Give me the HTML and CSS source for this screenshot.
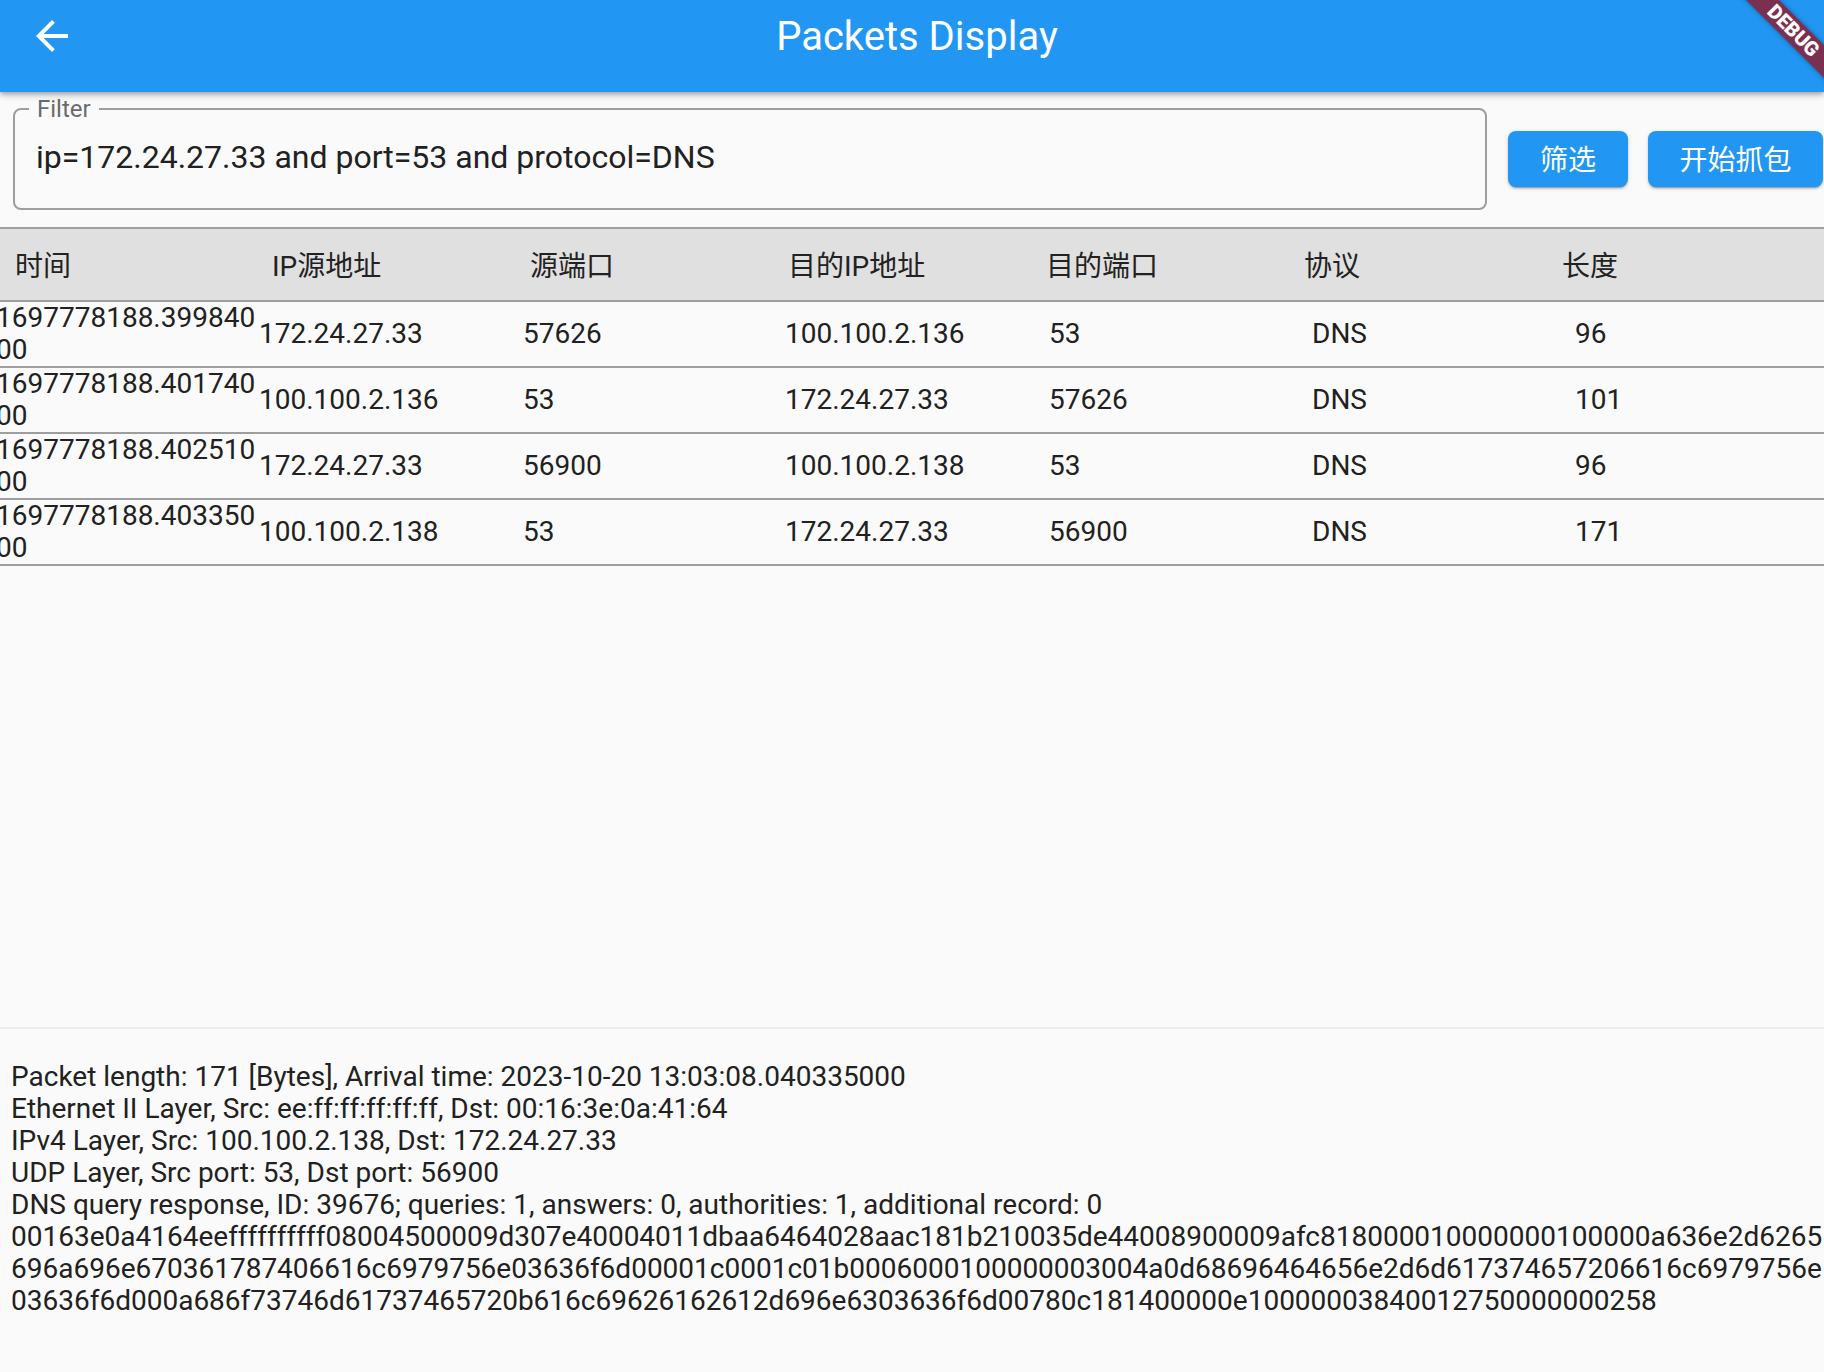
FILE: index.html
```html
<!DOCTYPE html>
<html lang="zh-CN">
<head>
<meta charset="utf-8">
<title>Packets Display</title>
<link rel="stylesheet" href="styles.css">
</head>
<body>
<div class="app">
  <header class="appbar">
    <div class="appbar-row">
      <button class="back" aria-label="Back">
        <svg viewBox="0 0 24 24" width="48" height="48"><path fill="#fff" d="M20 11H7.83l5.59-5.59L12 4l-8 8 8 8 1.41-1.41L7.83 13H20v-2z"/></svg>
      </button>
      <h1 class="title">Packets Display</h1>
    </div>
  </header>

  <main class="body">
    <div class="filter-row">
      <div class="field">
        <span class="field-label">Filter</span>
        <div class="field-input">ip=172.24.27.33 and port=53 and protocol=DNS</div>
      </div>
      <button class="btn btn-filter">筛选</button>
      <button class="btn btn-start">开始抓包</button>
    </div>

    <section class="table">
      <div class="thead">
        <div class="th">时间</div>
        <div class="th">IP源地址</div>
        <div class="th">源端口</div>
        <div class="th">目的IP地址</div>
        <div class="th">目的端口</div>
        <div class="th">协议</div>
        <div class="th">长度</div>
      </div>
      <div class="tr">
        <div class="td td-time">1697778188.39984000</div>
        <div class="td">172.24.27.33</div>
        <div class="td">57626</div>
        <div class="td">100.100.2.136</div>
        <div class="td">53</div>
        <div class="td">DNS</div>
        <div class="td">96</div>
      </div>
      <div class="tr">
        <div class="td td-time">1697778188.40174000</div>
        <div class="td">100.100.2.136</div>
        <div class="td">53</div>
        <div class="td">172.24.27.33</div>
        <div class="td">57626</div>
        <div class="td">DNS</div>
        <div class="td">101</div>
      </div>
      <div class="tr">
        <div class="td td-time">1697778188.40251000</div>
        <div class="td">172.24.27.33</div>
        <div class="td">56900</div>
        <div class="td">100.100.2.138</div>
        <div class="td">53</div>
        <div class="td">DNS</div>
        <div class="td">96</div>
      </div>
      <div class="tr">
        <div class="td td-time">1697778188.40335000</div>
        <div class="td">100.100.2.138</div>
        <div class="td">53</div>
        <div class="td">172.24.27.33</div>
        <div class="td">56900</div>
        <div class="td">DNS</div>
        <div class="td">171</div>
      </div>
    </section>

    <section class="details">
      <div class="line">Packet length: 171 [Bytes], Arrival time: 2023-10-20 13:03:08.040335000</div>
      <div class="line">Ethernet II Layer, Src: ee:ff:ff:ff:ff:ff, Dst: 00:16:3e:0a:41:64</div>
      <div class="line">IPv4 Layer, Src: 100.100.2.138, Dst: 172.24.27.33</div>
      <div class="line">UDP Layer, Src port: 53, Dst port: 56900</div>
      <div class="line">DNS query response, ID: 39676; queries: 1, answers: 0, authorities: 1, additional record: 0</div>
      <div class="line">00163e0a4164eeffffffffff08004500009d307e40004011dbaa6464028aac181b210035de44008900009afc818000010000000100000a636e2d6265</div>
      <div class="line">696a696e670361787406616c6979756e03636f6d00001c0001c01b0006000100000003004a0d68696464656e2d6d617374657206616c6979756e</div>
      <div class="line">03636f6d000a686f73746d61737465720b616c69626162612d696e6303636f6d00780c181400000e10000003840012750000000258</div>
    </section>
  </main>

  <div class="debug-corner"><div class="debug-band">DEBUG</div></div>
</div>
</body>
</html>
```

FILE: styles.css
```css
* { box-sizing: border-box; }

html, body {
  margin: 0;
  padding: 0;
  width: 1824px;
  height: 1372px;
  overflow: hidden;
  background: #fafafa;
}

body {
  font-family: Roboto, "Noto Sans CJK SC", sans-serif;
  color: #212121;
}

.app {
  position: relative;
  width: 1824px;
  height: 1372px;
  display: flex;
  flex-direction: column;
  overflow: hidden;
}

/* ---------- App bar ---------- */
.appbar {
  height: 92px;
  flex: 0 0 92px;
  background: #2196f3;
  box-shadow: 0 2px 4px -1px rgba(0,0,0,.2), 0 4px 5px 0 rgba(0,0,0,.14), 0 1px 10px 0 rgba(0,0,0,.12);
  position: relative;
  z-index: 2;
}

.appbar-row {
  height: 72px;
  display: flex;
  align-items: center;
}

.back {
  margin-left: 28px;
  width: 48px;
  height: 48px;
  padding: 0;
  border: 0;
  background: transparent;
  display: flex;
}

.title {
  flex: 1;
  margin: 2px 0 0 -66px;
  text-align: center;
  font-size: 40px;
  font-weight: 400;
  color: #fff;
  line-height: 48px;
}

/* ---------- Body ---------- */
.body {
  flex: 1;
  display: flex;
  flex-direction: column;
  min-height: 0;
}

.filter-row {
  display: flex;
  align-items: center;
  margin-top: 16px;
  padding: 0 1px 0 13px;
}

.field {
  position: relative;
  flex: 1;
  height: 102px;
  border: 2px solid #9e9e9e;
  border-radius: 8px;
}

.field-label {
  position: absolute;
  top: -13px;
  left: 14px;
  padding: 0 8px;
  background: #fafafa;
  font-size: 24px;
  line-height: 24px;
  color: #6b6b6b;
}

.field-input {
  padding: 28px 0 0 21px;
  font-size: 32px;
  line-height: 38px;
  color: #212121;
}

.btn {
  height: 56px;
  border: 0;
  border-radius: 8px;
  background: #2196f3;
  color: #fff;
  font-family: Roboto, "Noto Sans CJK SC", sans-serif;
  font-size: 28px;
  line-height: 52px;
  padding: 4px 0 0;
  box-shadow: 0 3px 1px -2px rgba(0,0,0,.2), 0 2px 2px 0 rgba(0,0,0,.14), 0 1px 5px 0 rgba(0,0,0,.12);
}

.btn-filter { width: 120px; margin-left: 21px; }
.btn-start { width: 175px; margin-left: 20px; }

/* ---------- Table ---------- */
.table {
  flex: 1;
  margin-top: 17px;
  border-top: 2px solid #a0a0a0;
}

.thead {
  display: grid;
  grid-template-columns: 257px repeat(5, 258px) 1fr;
  padding: 4px 0 0 15px;
  height: 73px;
  align-items: center;
  background: #e0e0e0;
  border-bottom: 2px solid #9e9e9e;
}

.th {
  font-size: 28px;
  line-height: 32px;
  color: #222;
}

.tr {
  display: grid;
  grid-template-columns: 263px 264px 262px 264px 263px 263px 1fr;
  margin-left: -4px;
  border-bottom: 2px solid #9e9e9e;
  align-items: center;
}

.td {
  font-size: 28px;
  line-height: 32px;
  color: #212121;
  white-space: nowrap;
}

.td-time {
  white-space: normal;
  overflow-wrap: anywhere;
  word-break: break-all;
}

/* ---------- Details ---------- */
.details {
  flex: 0 0 345px;
  border-top: 2px solid #ececec;
  padding: 32px 0 0 11px;
}

.line {
  font-size: 28px;
  line-height: 32px;
  white-space: nowrap;
  color: #212121;
}

/* ---------- Debug banner ---------- */
.debug-corner {
  position: absolute;
  top: 0;
  right: 0;
  width: 0;
  height: 0;
  z-index: 5;
}

.debug-band {
  position: absolute;
  left: -80px;
  top: 32px;
  width: 160px;
  height: 23px;
  transform-origin: 80px -32px;
  transform: rotate(45deg);
  background: rgb(124, 48, 80);
  box-shadow: 0 0 5px rgba(0,0,0,.4);
  color: #fff;
  font-family: Roboto, sans-serif;
  font-weight: 900;
  font-size: 20px;
  line-height: 23px;
  text-align: center;
}
```
